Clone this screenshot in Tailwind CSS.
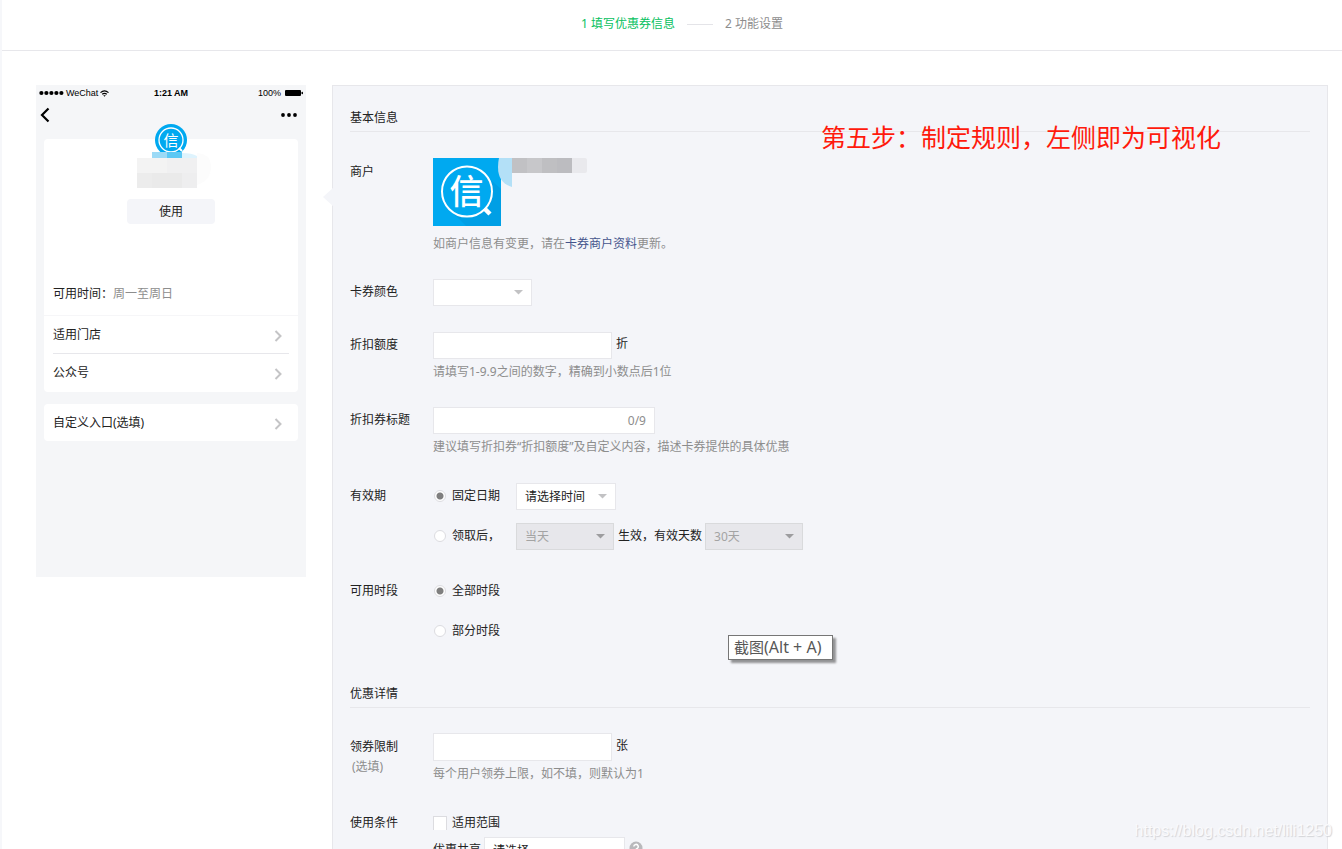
<!DOCTYPE html>
<html lang="zh-CN">
<head>
<meta charset="utf-8">
<title>填写优惠券信息</title>
<script src="https://cdn.jsdelivr.net/npm/@tailwindcss/browser@4"></script>
</head>
<body class="relative h-screen overflow-hidden border-l-2 border-[#f6f7fa] bg-white font-['Noto_Sans','Noto_Sans_CJK_SC',sans-serif] text-xs text-[#222]">

<header class="flex h-[51px] items-center justify-center border-b border-[#e7e7eb] pb-0.5 pl-5">
  <ol class="flex items-center gap-3 leading-5">
    <li class="text-[#07c160]">1 填写优惠券信息</li>
    <li aria-hidden="true" class="h-px w-[26px] bg-[#e4e4e8]"></li>
    <li class="text-[#8d8d8d]">2 功能设置</li>
  </ol>
</header>

<main class="flex items-start pt-[34px] pr-3.5 pl-[34px]">

  <!-- Phone preview -->
  <section aria-label="预览" class="mr-[26px] w-[270px] shrink-0 bg-[#f5f6f8] px-2 pb-[136px]">
    <div class="-mx-2 grid h-4 grid-cols-3 items-center px-[3px] pb-px font-['Liberation_Sans',sans-serif] text-[9px] leading-4 text-black">
      <div class="flex items-center gap-0.5">
        <svg width="25" height="6" viewBox="0 0 25 6"><circle cx="2.4" cy="3" r="2.1"/><circle cx="7.4" cy="3" r="2.1"/><circle cx="12.4" cy="3" r="2.1"/><circle cx="17.4" cy="3" r="2.1"/><circle cx="22.4" cy="3" r="2.1"/></svg>
        <span>WeChat</span>
        <svg width="9" height="7" viewBox="0 0 9 7" fill="none" stroke="#000" stroke-width="1.2"><path d="M.5 2.6Q4.5-.9 8.500 2.600M2.200 4.300Q4.500 2.400 6.800 4.300"/><path d="M3.200 5.200h2.600L4.500 6.700Z" fill="#000" stroke="none"/></svg>
      </div>
      <div class="text-center font-bold">1:21 AM</div>
      <div class="flex items-center justify-end gap-1">
        <span>100%</span>
        <svg width="18" height="6" viewBox="0 0 18 6"><rect width="16" height="6" rx="1"/><rect x="16.500" y="1.700" width="1.500" height="2.600" rx=".7"/></svg>
      </div>
    </div>
    <div class="relative flex h-[38px] items-start justify-between pt-1.5">
      <button aria-label="返回" class="-ml-1"><svg width="10" height="16" viewBox="0 0 10 16" fill="none" stroke="#000" stroke-width="2.200"><path d="M8.500 1.500 2 8l6.500 6.500"/></svg></button>
      <button aria-label="更多" class="mt-1.5"><svg width="18" height="4" viewBox="0 0 18 4"><circle cx="3" cy="2" r="1.900"/><circle cx="9" cy="2" r="1.900"/><circle cx="15" cy="2" r="1.900"/></svg></button>
      <svg class="absolute top-[22px] left-[93px]" width="76" height="68" viewBox="0 0 76 68">
        <circle cx="34" cy="17" r="16" fill="#00a9f0"/>
        <circle cx="34" cy="17" r="12" fill="none" stroke="#fff" stroke-width="1.300"/>
        <path d="m42 25 3 3" stroke="#fff" stroke-width="2"/>
        <text x="34" y="22.500" text-anchor="middle" font-size="15" fill="#fff" font-family="Noto Sans CJK SC">信</text>
        <path d="M0 35h60V30q14 1 14 14t-14 18L0 64Z" fill="#fcfcfc"/>
        <path d="M15 29h15v6H15z" fill="#9cdaf6"/><path d="M30 29h15v6H30z" fill="#5cc8f4"/><path d="M45 30q10 0 15 3v2H45z" fill="#def3fd"/>
        <path d="M0 35h15v15H0zM15 35h15v15H15z" fill="#f3f3f3"/><path d="M30 35h30v15H30z" fill="#f0f0f1"/>
        <path d="M0 50h15v15H0z" fill="#ececec"/><path d="M15 50h30v15H15z" fill="#eaeaea"/><path d="M45 50h15v15H45z" fill="#eeeeef"/>
      </svg>
    </div>
    <div class="rounded bg-white">
      <div class="h-[177px] border-b border-[#f6f6f8] pt-[60px]">
        <button class="mx-auto block h-[25px] w-[88px] rounded-sm bg-[#f4f5f9]">使用</button>
        <p class="mt-[60px] px-[9px] leading-5">可用时间：<span class="text-[#8d8d8d]">周一至周日</span></p>
      </div>
      <div class="px-[9px]">
        <a href="#" class="flex h-[38px] items-center justify-between border-b border-[#e7e7eb] pr-1.5">适用门店
          <svg class="mt-0.5" width="9" height="12" viewBox="0 0 9 12" fill="none" stroke="#c4c4c6" stroke-width="2"><path d="m1.500 1 5 5-5 5"/></svg></a>
        <a href="#" class="flex h-[38px] items-center justify-between pr-1.5">公众号
          <svg class="mt-0.5" width="9" height="12" viewBox="0 0 9 12" fill="none" stroke="#c4c4c6" stroke-width="2"><path d="m1.500 1 5 5-5 5"/></svg></a>
      </div>
    </div>
    <a href="#" class="mt-3 flex h-[37px] items-center justify-between rounded bg-white pr-[15px] pl-[9px]">自定义入口(选填)
      <svg class="mt-0.5" width="9" height="12" viewBox="0 0 9 12" fill="none" stroke="#c4c4c6" stroke-width="2"><path d="m1.500 1 5 5-5 5"/></svg></a>
  </section>

  <!-- Coupon form -->
  <form class="relative min-w-0 flex-1 border border-[#e7e7eb] bg-[#f4f5f9] px-[17px] pt-5 pb-10">
    <svg class="absolute top-[101px] -left-2.5" width="11" height="20" viewBox="0 0 11 20"><path d="M11 0 0 10l11 10Z" fill="#f4f5f9"/></svg>
    <p class="absolute top-[31px] left-[488px] text-[25px] leading-10 whitespace-nowrap text-[#ff1a0c]">第五步：制定规则，左侧即为可视化</p>

    <h2 class="border-b border-[#e7e7eb] pb-px leading-6">基本信息</h2>
    <div class="mt-[26px] flex flex-col gap-[26px]">
      <div class="flex">
        <div class="w-[83px] shrink-0 leading-7">商户</div>
        <div>
          <svg width="154" height="68" viewBox="0 0 154 68" role="img" aria-label="商户标志">
            <rect width="68" height="68" fill="#00a9f0"/>
            <path d="M51 16 68 31v37H33L17 52Z" fill="#009fe5"/>
            <circle cx="34" cy="33.500" r="25" fill="#00a9f0" stroke="#fff" stroke-width="2"/>
            <path d="m51.500 50.500 5.500 5.500" stroke="#fff" stroke-width="4.500"/>
            <text x="33.500" y="46" text-anchor="middle" font-size="34" font-weight="500" fill="#fff" font-family="Noto Sans CJK SC">信</text>
            <path d="M66 0h13v29q-14-4-14-20 0-5 1-9Z" fill="#b3e0f7"/>
            <path d="M79 0h15v15H79z" fill="#c1c1c4"/><path d="M94 0h15v15H94z" fill="#c7c7ca"/><path d="M109 0h15v15h-15z" fill="#bfbfc2"/><path d="M124 0h15v15h-15z" fill="#bcbcc0"/><path d="M139 0h13q2 0 2 2v11q0 2-2 2h-13z" fill="#e9e9ed"/>
          </svg>
          <p class="mt-2 leading-[19px] text-[#8d8d8d]">如商户信息有变更，请在<a href="#" class="text-[#44548c]">卡券商户资料</a>更新。</p>
        </div>
      </div>

      <div class="flex">
        <label for="color" class="w-[83px] shrink-0 leading-[26px]">卡券颜色</label>
        <div class="relative">
          <select id="color" class="block h-[27px] w-[99px] appearance-none border border-[#e7e7eb] bg-white px-2"><option></option></select>
          <svg class="pointer-events-none absolute top-[11px] right-[9px]" width="9" height="5" viewBox="0 0 9 5"><path d="M0 0h9L4.500 4.500Z" fill="#c2c2c4"/></svg>
        </div>
      </div>

      <div class="flex">
        <label for="discount" class="w-[83px] shrink-0 leading-[26px]">折扣额度</label>
        <div>
          <div class="flex gap-1 leading-6"><input id="discount" class="h-[27px] w-[179px] border border-[#e7e7eb] bg-white px-2">折</div>
          <p class="mt-[3px] leading-[19px] text-[#8d8d8d]">请填写1-9.9之间的数字，精确到小数点后1位</p>
        </div>
      </div>

      <div class="flex">
        <label for="title" class="w-[83px] shrink-0 leading-[26px]">折扣券标题</label>
        <div>
          <div class="flex h-[27px] w-[222px] items-center border border-[#e7e7eb] bg-white pr-2"><input id="title" class="min-w-0 flex-1 px-2 outline-none"><span class="text-[#8d8d8d]">0/9</span></div>
          <p class="mt-[3px] leading-[19px] text-[#8d8d8d]">建议填写折扣券“折扣额度”及自定义内容，描述卡券提供的具体优惠</p>
        </div>
      </div>

      <div class="flex">
        <div class="w-[83px] shrink-0 leading-7">有效期</div>
        <div class="flex flex-col gap-[13px] pt-px leading-[26px]">
          <div class="flex items-start">
            <label class="flex h-[25px] w-[83px] items-center gap-1.5 pl-px"><input type="radio" name="period" checked class="size-3 appearance-none rounded-full border border-[#dcdce0] bg-white bg-[radial-gradient(circle,#7f7f7f_3px,#fff_4px)]">固定日期</label>
            <div class="relative">
              <select aria-label="固定日期" class="block h-[27px] w-[100px] appearance-none border border-[#e7e7eb] bg-white px-2"><option>请选择时间</option></select>
              <svg class="pointer-events-none absolute top-[11px] right-[9px]" width="9" height="5" viewBox="0 0 9 5"><path d="M0 0h9L4.500 4.500Z" fill="#c2c2c4"/></svg>
            </div>
          </div>
          <div class="flex items-start">
            <label class="flex h-[25px] w-[83px] items-center gap-1.5 pl-px"><input type="radio" name="period" class="size-3 appearance-none rounded-full border border-[#dcdce0] bg-white">领取后，</label>
            <div class="relative">
              <select disabled aria-label="生效时间" class="block h-[27px] w-[98px] appearance-none border border-[#d9dadc] bg-[#e7e7eb] px-2 text-[#a3a3a3] opacity-100"><option>当天</option></select>
              <svg class="pointer-events-none absolute top-[11px] right-[9px]" width="9" height="5" viewBox="0 0 9 5"><path d="M0 0h9L4.500 4.500Z" fill="#9d9d9f"/></svg>
            </div>
            <span class="mr-[3px] ml-1">生效，有效天数</span>
            <div class="relative">
              <select disabled aria-label="有效天数" class="block h-[27px] w-[98px] appearance-none border border-[#d9dadc] bg-[#e7e7eb] px-2 text-[#a3a3a3] opacity-100"><option>30天</option></select>
              <svg class="pointer-events-none absolute top-[11px] right-[9px]" width="9" height="5" viewBox="0 0 9 5"><path d="M0 0h9L4.500 4.500Z" fill="#9d9d9f"/></svg>
            </div>
          </div>
        </div>
      </div>

      <div class="flex pt-px leading-7">
        <div class="w-[83px] shrink-0">可用时段</div>
        <div class="flex flex-col gap-3">
          <label class="flex items-center gap-1.5 pl-px"><input type="radio" name="hours" checked class="size-3 appearance-none rounded-full border border-[#dcdce0] bg-white bg-[radial-gradient(circle,#7f7f7f_3px,#fff_4px)]">全部时段</label>
          <label class="flex items-center gap-1.5 pl-px"><input type="radio" name="hours" class="size-3 appearance-none rounded-full border border-[#dcdce0] bg-white">部分时段</label>
        </div>
      </div>
    </div>

    <h2 class="mt-[37px] border-b border-[#e7e7eb] pb-px leading-6">优惠详情</h2>
    <div class="mt-[25px] flex flex-col gap-[26px]">
      <div class="flex">
        <label for="limit" class="w-[83px] shrink-0 leading-7">领券限制<span class="block pl-0.5 leading-3 text-[#8d8d8d]">(选填)</span></label>
        <div>
          <div class="flex gap-1 leading-[26px]"><input id="limit" class="h-7 w-[179px] border border-[#e7e7eb] bg-white px-2">张</div>
          <p class="mt-[3px] leading-[19px] text-[#8d8d8d]">每个用户领券上限，如不填，则默认为1</p>
        </div>
      </div>
      <div class="flex">
        <div class="w-[83px] shrink-0 leading-7">使用条件</div>
        <div>
          <label class="flex h-7 items-center gap-[5px]"><input type="checkbox" class="size-3.5 appearance-none border border-b-0 border-[#dcdce0] bg-white">适用范围</label>
          <div class="flex items-start leading-[26px]">
            <label for="share" class="mr-[3px]">优惠共享</label>
            <select id="share" class="block h-[27px] w-[141px] appearance-none border border-[#e7e7eb] bg-white px-2 pb-px"><option>请选择</option></select>
            <svg class="mt-1 ml-1" width="14" height="14" viewBox="0 0 14 14"><circle cx="7" cy="7" r="6.500" fill="#b9b9bc"/><path d="M4.800 5.600a2.200 2.200 0 1 1 3.300 1.900Q7 8 7 9m0 1v1.500" fill="none" stroke="#fff" stroke-width="1.500"/></svg>
          </div>
        </div>
      </div>
    </div>
  </form>
</main>

<div role="tooltip" class="absolute top-[635px] left-[726px] min-w-[105px] border border-[#767676] bg-white px-[5px] text-[15px] leading-[23px] whitespace-nowrap text-[#575757] shadow-[3px_3px_2px_0px_rgba(0,0,0,0.4)]">截图<span class="text-base leading-[23px]">(Alt + A)</span></div>
<div class="absolute right-2.5 bottom-2 font-['Liberation_Sans',sans-serif] text-base leading-5 text-[#fafafc] [text-shadow:1px_1px_1px_#d2d3d7]">https://blog.csdn.net/lili1250</div>
</body>
</html>
